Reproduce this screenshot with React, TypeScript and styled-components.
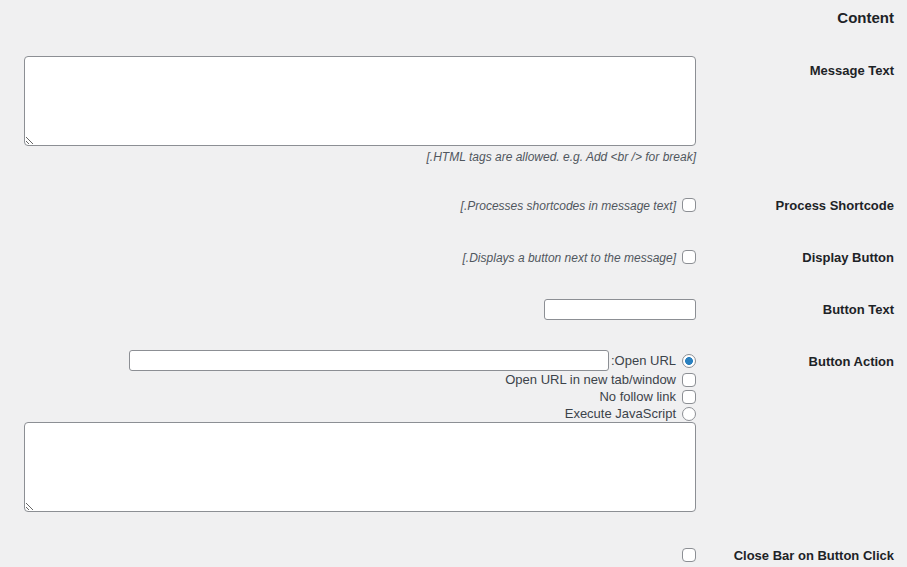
import { createGlobalStyle } from "styled-components";
import styled from "styled-components";

const GlobalStyle = createGlobalStyle`
  html, body {
    margin: 0;
    padding: 0;
    background: #f0f0f1;
  }
  body {
    font-family: "Liberation Sans", Arial, sans-serif;
    color: #3c434a;
    font-size: 13px;
  }
`;

const Page = styled.div`
  direction: rtl;
  padding: 0 13px 0 14px;
`;

const SectionTitle = styled.h2`
  margin: 4px 0 9px;
  font-size: 15px;
  line-height: 28px;
  font-weight: 700;
  color: #1d2327;
`;

const Row = styled.div`
  display: grid;
  grid-template-columns: 188px 1fr;
  align-items: start;
  padding: 15px 0 9px;
`;

const Label = styled.div`
  font-size: 13px;
  font-weight: 700;
  line-height: 28px;
  color: #1d2327;
  margin: 1px 0 -1px;
`;

const Field = styled.div`
  padding: 0 10px;
  line-height: 28px;
`;

const TextArea = styled.textarea<{ $gapBelow?: number }>`
  display: block;
  box-sizing: border-box;
  width: 100%;
  height: 90px;
  margin: 0 0 ${(p) => p.$gapBelow ?? 0}px;
  border: 1px solid #8c8f94;
  border-radius: 4px;
  background: #fff;
  resize: vertical;
  font-family: inherit;
`;

const TextInput = styled.input<{ $width: number }>`
  box-sizing: border-box;
  width: ${(p) => p.$width}px;
  height: 21px;
  margin: 0;
  border: 1px solid #8c8f94;
  border-radius: 3px;
  background: #fff;
  vertical-align: middle;
  padding: 0 6px;
`;

const Description = styled.p`
  margin: 1px 0 0;
  font-size: 12px;
  line-height: 20px;
  font-style: italic;
  color: #50575e;
`;

const Check = styled.input`
  appearance: none;
  box-sizing: border-box;
  width: 14px;
  height: 14px;
  margin: 0 0 0 6px;
  border: 1px solid #8c8f94;
  border-radius: 4px;
  background: #fff;
  vertical-align: middle;
  flex: none;
`;

const Radio = styled(Check)`
  border-radius: 50%;
  &:checked {
    background: radial-gradient(circle, #2a80bf 0 3.6px, #fff 4.2px);
  }
`;

const Option = styled.label<{ $line: number }>`
  display: flex;
  align-items: center;
  height: ${(p) => p.$line}px;
  line-height: ${(p) => p.$line}px;
  white-space: nowrap;
`;

const Gap = styled.span`
  display: inline-block;
  width: 2px;
`;

const ActionList = styled.div`
  display: flex;
  flex-direction: column;
  align-items: flex-start;
  padding-top: 3px;
  line-height: normal;
`;

export default function App() {
  return (
    <>
      <GlobalStyle />
      <Page>
        <SectionTitle>Content</SectionTitle>

        <Row>
          <Label>Message Text</Label>
          <Field>
            <TextArea />
            <Description>[HTML tags are allowed. e.g. Add &lt;br /&gt; for break.]</Description>
          </Field>
        </Row>

        <Row>
          <Label>Process Shortcode</Label>
          <Field>
            <Option $line={28}>
              <Check type="checkbox" />
              <Description as="span">[Processes shortcodes in message text.]</Description>
            </Option>
          </Field>
        </Row>

        <Row>
          <Label>Display Button</Label>
          <Field>
            <Option $line={28}>
              <Check type="checkbox" />
              <Description as="span">[Displays a button next to the message.]</Description>
            </Option>
          </Field>
        </Row>

        <Row>
          <Label>Button Text</Label>
          <Field>
            <TextInput type="text" $width={152} />
          </Field>
        </Row>

        <Row>
          <Label>Button Action</Label>
          <Field>
            <ActionList>
              <Option $line={21}>
                <Radio type="radio" name="action" defaultChecked />
                Open URL:
                <Gap />
                <TextInput type="text" $width={480} />
              </Option>
              <Option $line={17}>
                <Check type="checkbox" />
                Open URL in new tab/window
              </Option>
              <Option $line={17}>
                <Check type="checkbox" />
                No follow link
              </Option>
              <Option $line={17}>
                <Radio type="radio" name="action" />
                Execute JavaScript
              </Option>
              <TextArea $gapBelow={5} />
            </ActionList>
          </Field>
        </Row>

        <Row>
          <Label>Close Bar on Button Click</Label>
          <Field>
            <Option $line={28}>
              <Check type="checkbox" />
            </Option>
          </Field>
        </Row>
      </Page>
    </>
  );
}
